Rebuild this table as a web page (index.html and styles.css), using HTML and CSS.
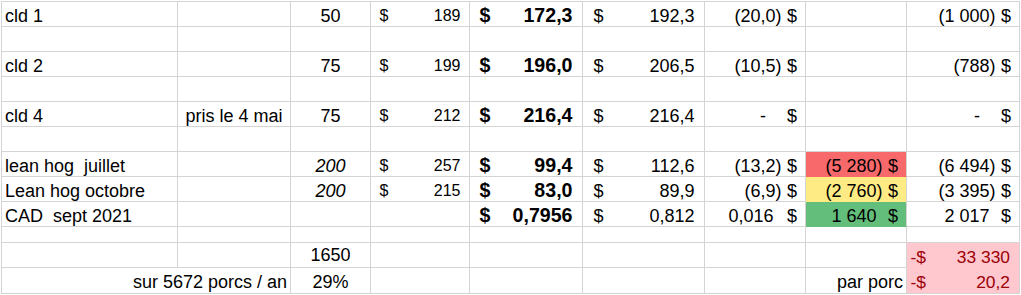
FILE: index.html
```html
<!DOCTYPE html>
<html lang="fr">
<head>
<meta charset="utf-8">
<title>Couverture porcs</title>
<link rel="stylesheet" href="styles.css">
</head>
<body>
<div class="sheet">
  <!-- row 1 -->
  <div class="c lbl">cld 1</div>
  <div class="c"></div>
  <div class="c ctr">50</div>
  <div class="c acc d"><span>$</span><span>189</span></div>
  <div class="c acc e"><span>$</span><span>172,3</span></div>
  <div class="c acc f"><span>$</span><span>192,3</span></div>
  <div class="c cur"><span>(20,0)</span><span>$</span></div>
  <div class="c"></div>
  <div class="c cur"><span>(1 000)</span><span>$</span></div>
  <!-- row 2 -->
  <div class="c"></div><div class="c"></div><div class="c"></div><div class="c"></div><div class="c"></div><div class="c"></div><div class="c"></div><div class="c"></div><div class="c"></div>
  <!-- row 3 -->
  <div class="c lbl">cld 2</div>
  <div class="c"></div>
  <div class="c ctr">75</div>
  <div class="c acc d"><span>$</span><span>199</span></div>
  <div class="c acc e"><span>$</span><span>196,0</span></div>
  <div class="c acc f"><span>$</span><span>206,5</span></div>
  <div class="c cur"><span>(10,5)</span><span>$</span></div>
  <div class="c"></div>
  <div class="c cur"><span>(788)</span><span>$</span></div>
  <!-- row 4 -->
  <div class="c"></div><div class="c"></div><div class="c"></div><div class="c"></div><div class="c"></div><div class="c"></div><div class="c"></div><div class="c"></div><div class="c"></div>
  <!-- row 5 -->
  <div class="c lbl">cld 4</div>
  <div class="c ctr">pris le 4 mai</div>
  <div class="c ctr">75</div>
  <div class="c acc d"><span>$</span><span>212</span></div>
  <div class="c acc e"><span>$</span><span>216,4</span></div>
  <div class="c acc f"><span>$</span><span>216,4</span></div>
  <div class="c cur"><span class="zero">-</span><span>$</span></div>
  <div class="c"></div>
  <div class="c cur"><span class="zero">-</span><span>$</span></div>
  <!-- row 6 -->
  <div class="c"></div><div class="c"></div><div class="c"></div><div class="c"></div><div class="c"></div><div class="c"></div><div class="c"></div><div class="c"></div><div class="c"></div>
  <!-- row 7 -->
  <div class="c lbl">lean hog  juillet</div>
  <div class="c"></div>
  <div class="c ctr it">200</div>
  <div class="c acc d"><span>$</span><span>257</span></div>
  <div class="c acc e"><span>$</span><span>99,4</span></div>
  <div class="c acc f"><span>$</span><span>112,6</span></div>
  <div class="c cur"><span>(13,2)</span><span>$</span></div>
  <div class="c cur red"><span>(5 280)</span><span>$</span></div>
  <div class="c cur"><span>(6 494)</span><span>$</span></div>
  <!-- row 8 -->
  <div class="c lbl">Lean hog octobre</div>
  <div class="c"></div>
  <div class="c ctr it">200</div>
  <div class="c acc d"><span>$</span><span>215</span></div>
  <div class="c acc e"><span>$</span><span>83,0</span></div>
  <div class="c acc f"><span>$</span><span>89,9</span></div>
  <div class="c cur"><span>(6,9)</span><span>$</span></div>
  <div class="c cur yellow"><span>(2 760)</span><span>$</span></div>
  <div class="c cur"><span>(3 395)</span><span>$</span></div>
  <!-- row 9 -->
  <div class="c lbl">CAD  sept 2021</div>
  <div class="c"></div>
  <div class="c"></div>
  <div class="c"></div>
  <div class="c acc e"><span>$</span><span>0,7956</span></div>
  <div class="c acc f"><span>$</span><span>0,812</span></div>
  <div class="c cur"><span class="pos wide">0,016</span><span>$</span></div>
  <div class="c cur green"><span class="pos">1 640</span><span>$</span></div>
  <div class="c cur"><span class="pos">2 017</span><span>$</span></div>
  <!-- row 10 -->
  <div class="c"></div><div class="c"></div><div class="c"></div><div class="c"></div><div class="c"></div><div class="c"></div><div class="c"></div><div class="c"></div><div class="c"></div>
  <!-- row 11 -->
  <div class="c"></div>
  <div class="c"></div>
  <div class="c ctr lift">1650</div>
  <div class="c"></div>
  <div class="c"></div>
  <div class="c"></div>
  <div class="c"></div>
  <div class="c"></div>
  <div class="c bad bad-top"><span>-$</span><span>33 330</span></div>
  <!-- row 12 -->
  <div class="c span2 rt lift-s">sur 5672 porcs / an</div>
  <div class="c ctr lift-s">29%</div>
  <div class="c"></div>
  <div class="c"></div>
  <div class="c"></div>
  <div class="c"></div>
  <div class="c rt lift-s">par porc</div>
  <div class="c bad lift-s"><span>-$</span><span>20,2</span></div>
</div>
</body>
</html>
```

FILE: styles.css
```css
html, body {
  margin: 0;
  padding: 0;
  background: #ffffff;
}

body {
  font-family: "Liberation Sans", Arial, sans-serif;
  font-size: 18px;
  color: #000000;
}

.sheet {
  display: grid;
  grid-template-columns: 176px 113px 80px 99px 113px 122px 101px 101px 113px;
  grid-template-rows: repeat(9, 25px) 16px 25px 26px;
  width: max-content;
  margin: 1px 0 0 1px;
  border-left: 1px solid #d4d4d4;
  border-top: 1px solid #d4d4d4;
}

.c {
  box-sizing: border-box;
  display: flex;
  align-items: flex-end;
  min-width: 0;
  line-height: 20px;
  white-space: pre;
  padding: 0 3px;
  border-right: 1px solid #d4d4d4;
  border-bottom: 1px solid #d4d4d4;
}

.lbl {
  justify-content: flex-start;
}

.ctr {
  justify-content: center;
}

.rt {
  justify-content: flex-end;
}

.it {
  font-style: italic;
}

.span2 {
  grid-column: span 2;
}

/* accounting: $ at left, number at right */
.acc {
  justify-content: space-between;
}

.d {
  font-size: 16px;
  padding: 0 8.5px 0 8.5px;
}

.e {
  font-size: 19.6px;
  font-weight: bold;
  padding: 0 9.5px 1px 9.5px;
}

.f {
  padding: 0 9.5px 0 10.5px;
}

/* number followed by currency sign */
.cur {
  justify-content: flex-end;
  gap: 5.5px;
  padding-right: 8px;
}

.pos {
  padding-right: 0.333em;
}

.pos.wide {
  padding-right: 8px;
}

.zero {
  padding-right: 15.5px;
}

.red {
  background: #f8696b;
  border-bottom-color: #f8696b;
}

.yellow {
  background: #ffeb84;
  border-bottom-color: #ffeb84;
}

.green {
  background: #63be7b;
  border-bottom-color: #63be7b;
}

.bad {
  background: #ffc7ce;
  color: #9c0006;
  font-size: 17.4px;
  justify-content: space-between;
  padding: 0 9px 0 3.5px;
}

.bad-top {
  border-bottom-color: #ffc7ce;
}

.lift {
  padding-bottom: 2px;
}

.lift-s {
  padding-bottom: 1.5px;
}
```
